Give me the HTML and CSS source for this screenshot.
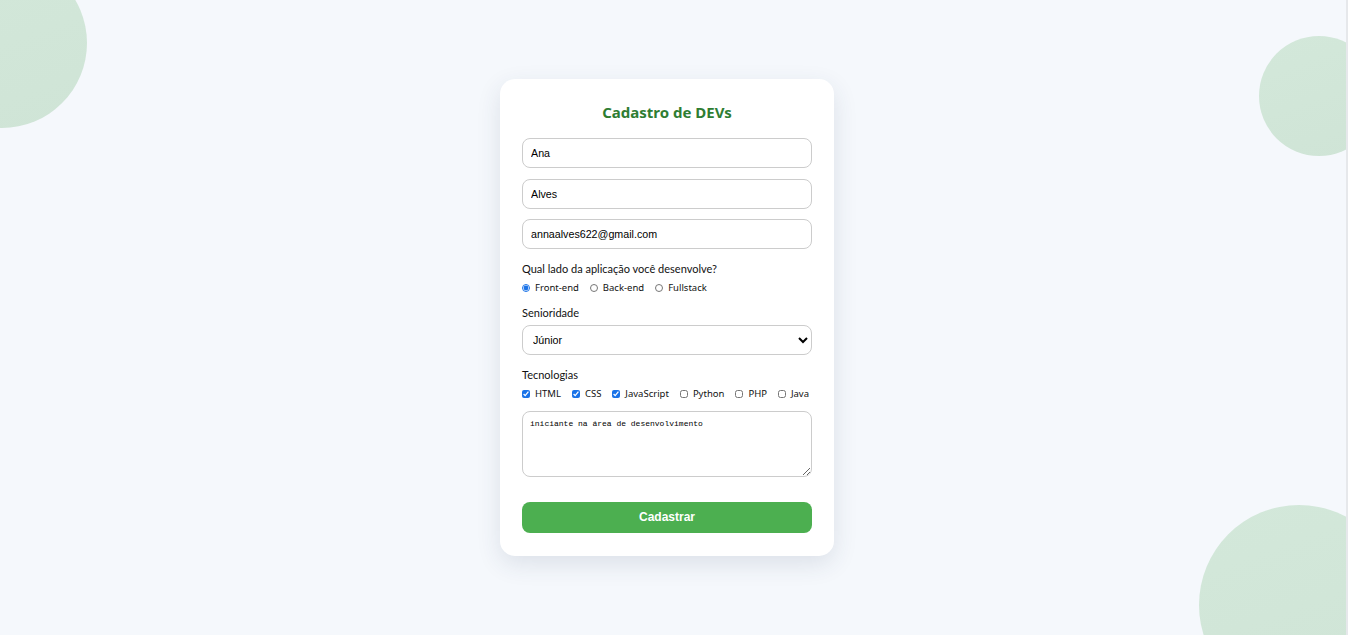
FILE: index.html
```html
<!DOCTYPE html>
<html lang="pt-BR">
<head>
<meta charset="utf-8">
<title>Cadastro de DEVs</title>
<link rel="stylesheet" href="styles.css">
</head>
<body>
<div class="bubble bubble-tl"></div>
<div class="bubble bubble-tr"></div>
<div class="bubble bubble-br"></div>
<div class="edge"></div>
<main class="page">
  <form class="card">
    <h2 class="title">Cadastro de DEVs</h2>
    <input class="field" type="text" value="Ana">
    <input class="field" type="text" value="Alves">
    <input class="field" type="email" value="annaalves622@gmail.com">

    <p class="label label-side">Qual lado da aplicação você desenvolve?</p>
    <div class="options">
      <label class="opt"><input type="radio" name="lado" checked><span>Front-end</span></label>
      <label class="opt"><input type="radio" name="lado"><span>Back-end</span></label>
      <label class="opt"><input type="radio" name="lado"><span>Fullstack</span></label>
    </div>

    <p class="label label-sen">Senioridade</p>
    <select class="field select">
      <option selected>Júnior</option>
      <option>Pleno</option>
      <option>Sênior</option>
    </select>

    <p class="label label-tec">Tecnologias</p>
    <div class="options">
      <label class="opt"><input type="checkbox" checked><span>HTML</span></label>
      <label class="opt"><input type="checkbox" checked><span>CSS</span></label>
      <label class="opt"><input type="checkbox" checked><span>JavaScript</span></label>
      <label class="opt"><input type="checkbox"><span>Python</span></label>
      <label class="opt"><input type="checkbox"><span>PHP</span></label>
      <label class="opt"><input type="checkbox"><span>Java</span></label>
    </div>

    <textarea class="bio">iniciante na área de desenvolvimento</textarea>

    <button class="submit" type="button">Cadastrar</button>
  </form>
</main>
</body>
</html>
```

FILE: styles.css
```css
* { box-sizing: border-box; }

html, body {
  margin: 0;
  padding: 0;
  height: 100%;
  overflow: hidden;
}

body {
  background: #f5f8fc;
  font-family: "Noto Sans", "Open Sans", sans-serif;
  color: #111;
}

.bubble {
  position: absolute;
  border-radius: 50%;
  background: linear-gradient(160deg, #d3e8da, #cfe4d6);
  z-index: 0;
}
.bubble-tl { width: 170px; height: 170px; left: -83px; top: -42px; }
.bubble-tr { width: 120px; height: 120px; left: 1259px; top: 36px; }
.bubble-br { width: 200px; height: 200px; left: 1199px; top: 505px; }

.edge {
  position: fixed;
  top: 0;
  bottom: 0;
  left: 1346px;
  width: 2px;
  background: #e6e8eb;
  z-index: 2;
}

.page {
  position: relative;
  z-index: 1;
  display: flex;
  justify-content: center;
  padding: 79px 14px 0 0;
}

.card {
  width: 334px;
  background: #fff;
  border-radius: 15px;
  box-shadow: 0 8px 24px rgba(40, 60, 90, 0.12);
  padding: 22px 22px 23px;
  display: flex;
  flex-direction: column;
}

.title {
  margin: 0 0 15px;
  text-align: center;
  color: #2e7d32;
  font-size: 15px;
  font-weight: 700;
  line-height: 22px;
}

.field {
  display: block;
  width: 290px;
  height: 30px;
  border: 1px solid #cccccc;
  border-radius: 8px;
  padding: 0 8px;
  font-family: "Liberation Sans", Arial, sans-serif;
  font-size: 10.7px;
  color: #000;
  background: #fff;
  margin: 0 0 10.5px;
}

.select {
  padding: 0 6px;
  margin-bottom: 0;
}

.label {
  margin: 0;
  font-family: "Lato", "Noto Sans", sans-serif;
  font-size: 11px;
  line-height: 16px;
  color: #111;
}
.label-side { margin-top: 1px; }
.label-sen { margin-top: 9px; margin-bottom: 4px; }
.label-tec { margin-top: 12px; }

.options {
  display: flex;
  align-items: center;
  gap: 11px;
  margin-top: 3px;
  height: 16px;
}

.opt {
  display: flex;
  align-items: center;
  gap: 5px;
  font-size: 9.5px;
  color: #111;
}

.opt input {
  margin: 0;
  width: 8px;
  height: 8px;
  accent-color: #1a73e8;
}

.bio {
  display: block;
  width: 290px;
  height: 66px;
  margin-top: 9px;
  border: 1px solid #cccccc;
  border-radius: 8px;
  padding: 7px 7px;
  font-family: "Liberation Mono", "Courier New", monospace;
  font-size: 8px;
  color: #000;
  resize: vertical;
}

.submit {
  margin-top: 25px;
  width: 290px;
  height: 31px;
  border: none;
  border-radius: 8px;
  background: #4caf50;
  color: #fff;
  font-family: "Liberation Sans", Arial, sans-serif;
  font-weight: 700;
  font-size: 12px;
}
```
